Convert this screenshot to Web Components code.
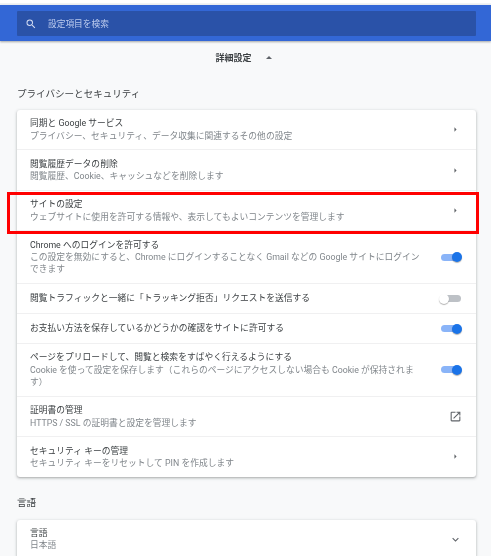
<!DOCTYPE html>
<html lang="ja">

<head>
    <meta charset="UTF-8">
    <title>設定</title>
    <style>
        html, body {
            margin: 0;
            height: 100%;
            overflow: hidden;
            background: #f8f9fa;
            font-family: Roboto, "Noto Sans CJK JP", sans-serif;
        }
        /* the reference is a slightly soft capture */
        body > :not(red-frame) {
            filter: blur(0.3px);
        }
    </style>
</head>

<body>
    <settings-search placeholder="設定項目を検索"></settings-search>
    <advanced-toggle>詳細設定</advanced-toggle>

    <section-title style="height:34px;padding-top:3px">プライバシーとセキュリティ</section-title>
    <settings-card>
        <settings-row icon="arrow" label="同期と Google サービス" sub="プライバシー、セキュリティ、データ収集に関連するその他の設定"></settings-row>
        <settings-row icon="arrow" label="閲覧履歴データの削除" sub="閲覧履歴、Cookie、キャッシュなどを削除します"></settings-row>
        <settings-row icon="arrow" label="サイトの設定" sub="ウェブサイトに使用を許可する情報や、表示してもよいコンテンツを管理します"></settings-row>
        <settings-row icon="on" label="Chrome へのログインを許可する" sub="この設定を無効にすると、Chrome にログインすることなく Gmail などの Google サイトにログインできます"></settings-row>
        <settings-row icon="off" label="閲覧トラフィックと一緒に「トラッキング拒否」リクエストを送信する"></settings-row>
        <settings-row icon="on" label="お支払い方法を保存しているかどうかの確認をサイトに許可する"></settings-row>
        <settings-row icon="on" label="ページをプリロードして、閲覧と検索をすばやく行えるようにする" sub="Cookie を使って設定を保存します（これらのページにアクセスしない場合も Cookie が保持されます）"></settings-row>
        <settings-row icon="external" label="証明書の管理" sub="HTTPS / SSL の証明書と設定を管理します"></settings-row>
        <settings-row icon="arrow" label="セキュリティ キーの管理" sub="セキュリティ キーをリセットして PIN を作成します"></settings-row>
    </settings-card>

    <section-title style="height:36px;padding-top:7px">言語</section-title>
    <settings-card>
        <settings-row icon="down" label="言語" sub="日本語"></settings-row>
    </settings-card>

    <red-frame></red-frame>

    <script>

        class SettingsSearch extends HTMLElement {
            constructor() {
                super();
                this.attachShadow({ mode: 'open' });
                this.shadowRoot.innerHTML = `
            <style>
                :host {
                    display: block;
                    padding-top: 3px;
                    background: linear-gradient(#fff 3px, #f1f3f4 3px);
                }
                .bar {
                    margin-top: 2px;
                    height: 36px;
                    padding: 6px 15px 5px 17px;
                    box-sizing: border-box;
                    background: #3367d6;
                    box-shadow: 0 1px 2px rgba(60, 64, 67, 0.45);
                }
                .box {
                    height: 25px;
                    display: flex;
                    align-items: center;
                    background: #2a52a8;
                    border-radius: 1px;
                    color: #bccbee;
                    font-size: 8.7px;
                }
                svg {
                    width: 12px;
                    height: 12px;
                    margin: 0 11px 0 8px;
                    fill: #d5def3;
                }
            </style>
            <div class="bar">
                <div class="box">
                    <svg viewBox="0 0 24 24"><path d="M15.5 14h-.79l-.28-.27A6.47 6.47 0 0 0 16 9.5 6.5 6.5 0 1 0 9.5 16c1.61 0 3.09-.59 4.23-1.57l.27.28v.79l5 4.99L20.49 19l-4.99-5zm-6 0C7.01 14 5 11.99 5 9.5S7.01 5 9.5 5 14 7.01 14 9.5 11.99 14 9.5 14z"/></svg>
                    <span class="text"></span>
                </div>
            </div>
        `;
            }

            connectedCallback() {
                this.shadowRoot.querySelector('.text').textContent = this.getAttribute('placeholder');
            }
        }

        class AdvancedToggle extends HTMLElement {
            constructor() {
                super();
                this.attachShadow({ mode: 'open' });
                this.shadowRoot.innerHTML = `
            <style>
                :host {
                    display: flex;
                    justify-content: center;
                    align-items: center;
                    height: 32px;
                    padding-right: 4px;
                    font-size: 9px;
                    font-weight: 700;
                    color: #3c4043;
                }
                .caret {
                    width: 0;
                    height: 0;
                    margin-left: 14px;
                    border: 3px solid transparent;
                    border-top: 0;
                    border-bottom: 3px solid #5f6368;
                }
            </style>
            <slot></slot><span class="caret"></span>
        `;
            }
        }

        class SectionTitle extends HTMLElement {
            constructor() {
                super();
                this.attachShadow({ mode: 'open' });
                this.shadowRoot.innerHTML = `
            <style>
                :host {
                    display: flex;
                    align-items: center;
                    padding: 0 17px;
                    font-size: 9.55px;
                    color: #3c4043;
                }
            </style>
            <slot></slot>
        `;
            }
        }

        class SettingsCard extends HTMLElement {
            constructor() {
                super();
                this.attachShadow({ mode: 'open' });
                this.shadowRoot.innerHTML = `
            <style>
                :host {
                    display: block;
                    margin: 0 15px 0 17px;
                    background: #fff;
                    border-radius: 3px;
                    box-shadow: 0 1px 2px rgba(60, 64, 67, 0.3), 0 1px 3px 1px rgba(60, 64, 67, 0.12);
                }
            </style>
            <slot></slot>
        `;
            }
        }

        class SettingsRow extends HTMLElement {
            constructor() {
                super();
                this.attachShadow({ mode: 'open' });
                this.shadowRoot.innerHTML = `
            <style>
                :host {
                    display: flex;
                    align-items: center;
                    min-height: 30px;
                    padding: 7.3px 14px 7.3px 13px;
                    box-sizing: border-box;
                    font-size: 8.77px;
                    line-height: 12.4px;
                    border-top: 1px solid #f0f0f1;
                }
                :host(:first-child) {
                    border-top: 0;
                }
                .text {
                    width: 392px;
                    flex: none;
                }
                .label {
                    color: #3c4043;
                }
                .sub {
                    color: #80868b;
                }
                .end {
                    flex: 1;
                    display: flex;
                    justify-content: flex-end;
                }
                svg {
                    display: block;
                    width: 13px;
                    height: 13px;
                    fill: #5f6368;
                }
            </style>
            <div class="text">
                <div class="label"></div>
                <div class="sub"></div>
            </div>
            <div class="end"></div>
        `;
            }

            connectedCallback() {
                const root = this.shadowRoot;
                root.querySelector('.label').textContent = this.getAttribute('label');
                const sub = root.querySelector('.sub');
                if (this.hasAttribute('sub')) {
                    sub.textContent = this.getAttribute('sub');
                } else {
                    sub.remove();
                }
                root.querySelector('.end').innerHTML = this.iconMarkup(this.getAttribute('icon'));
            }

            iconMarkup(icon) {
                if (icon === 'on') return '<toggle-switch checked></toggle-switch>';
                if (icon === 'off') return '<toggle-switch></toggle-switch>';
                if (icon === 'external') {
                    return '<svg viewBox="0 0 24 24"><path d="M19 19H5V5h7V3H5a2 2 0 0 0-2 2v14a2 2 0 0 0 2 2h14c1.1 0 2-.9 2-2v-7h-2v7zM14 3v2h3.59l-9.83 9.83 1.41 1.41L19 6.41V10h2V3h-7z"/></svg>';
                }
                if (icon === 'down') {
                    return '<svg viewBox="0 0 24 24"><path d="M7.41 8.59 12 13.17l4.59-4.58L18 10l-6 6-6-6z"/></svg>';
                }
                return '<svg viewBox="0 0 24 24"><path d="M10 8v8l4-4z"/></svg>';
            }
        }

        class ToggleSwitch extends HTMLElement {
            constructor() {
                super();
                this.attachShadow({ mode: 'open' });
                this.shadowRoot.innerHTML = `
            <style>
                :host {
                    display: block;
                    position: relative;
                    width: 20px;
                    height: 7px;
                    margin-right: 1px;
                    border-radius: 4px;
                    background: #bdc1c6;
                }
                :host([checked]) {
                    background: #8ab4f8;
                }
                .thumb {
                    position: absolute;
                    top: -1.5px;
                    left: -2px;
                    width: 10px;
                    height: 10px;
                    border-radius: 50%;
                    background: #fff;
                    box-shadow: 0 1px 1px rgba(0, 0, 0, 0.3);
                }
                :host([checked]) .thumb {
                    left: auto;
                    right: -1px;
                    background: #1a73e8;
                }
            </style>
            <div class="thumb"></div>
        `;
            }
        }

        class RedFrame extends HTMLElement {
            constructor() {
                super();
                this.attachShadow({ mode: 'open' });
                this.shadowRoot.innerHTML = `
            <style>
                :host {
                    position: absolute;
                    left: 7px;
                    top: 192px;
                    width: 472px;
                    height: 42px;
                    box-sizing: border-box;
                    border: 3px solid #f00;
                }
            </style>
        `;
            }
        }

        customElements.define('settings-search', SettingsSearch);
        customElements.define('advanced-toggle', AdvancedToggle);
        customElements.define('section-title', SectionTitle);
        customElements.define('settings-card', SettingsCard);
        customElements.define('settings-row', SettingsRow);
        customElements.define('toggle-switch', ToggleSwitch);
        customElements.define('red-frame', RedFrame);

    </script>
</body>

</html>
